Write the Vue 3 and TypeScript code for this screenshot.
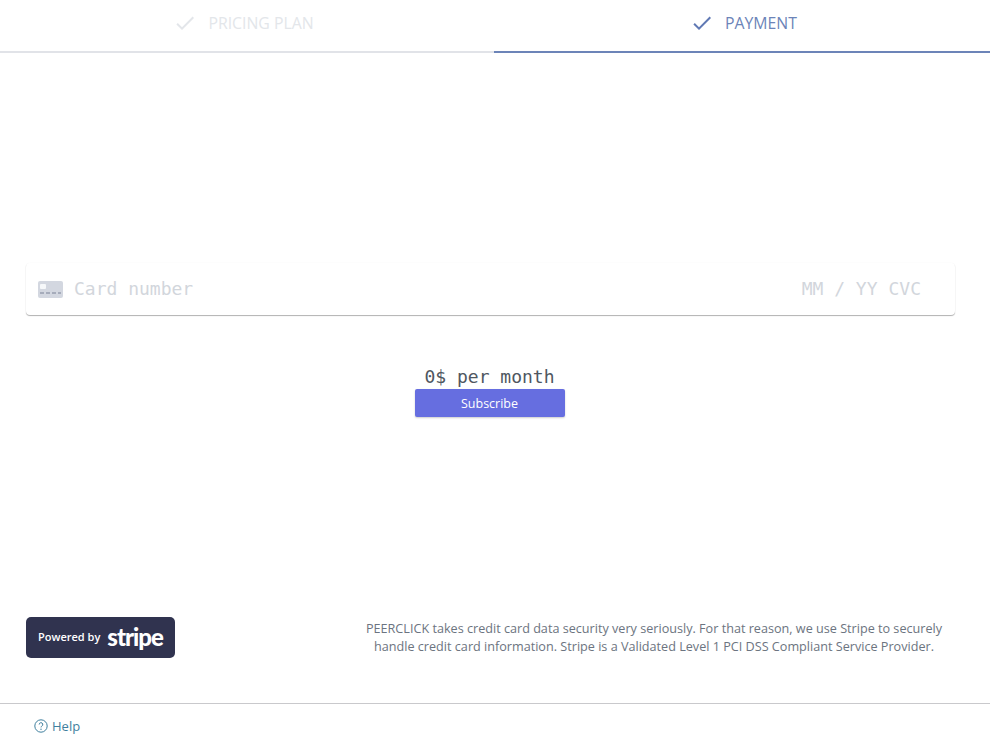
<template>
  <div class="page">
    <!-- STEPS -->
    <div class="steps">
      <div v-for="step in steps" :key="step.label" class="step" :class="{ active: step.active }">
        <svg class="check" width="24" height="24" viewBox="0 0 24 24">
          <path d="M9 16.2 4.8 12l-1.4 1.4L9 19 21 7l-1.4-1.4z" />
        </svg>
        <span>{{ step.label }}</span>
      </div>
    </div>

    <main class="content">
      <div class="card-field">
        <svg class="card-icon" width="25" height="17" viewBox="0 0 25 17">
          <rect width="25" height="17" rx="2" fill="#d3d7e0" />
          <rect x="2" y="3" width="6" height="5" rx="1" fill="#f6f8fa" />
          <path d="M2 12h4M8 12h4M14 12h4M20 12h3" stroke="#989fae" stroke-width="1.4" />
        </svg>
        <span class="card-number">Card number</span>
        <span class="card-date">MM / YY</span>
        <span class="card-cvc">CVC</span>
      </div>

      <div class="checkout">
        <div class="price">0$ per month</div>
        <button class="subscribe">Subscribe</button>
      </div>

      <div class="security">
        <div class="stripe-badge">
          <span class="powered">Powered by</span>
          <span class="stripe-word">stripe</span>
        </div>
        <p class="security-text">
          PEERCLICK takes credit card data security very seriously. For that reason, we use Stripe to securely
          handle credit card information. Stripe is a Validated Level 1 PCI DSS Compliant Service Provider.
        </p>
      </div>
    </main>

    <footer class="footer">
      <a class="help">
        <svg width="14" height="14" viewBox="0 0 14 14" fill="none">
          <circle cx="7" cy="7" r="6.2" stroke="#3f7f9e" />
          <path d="M5.2 5.5a1.8 1.8 0 1 1 2.6 1.6c-.6.3-.8.7-.8 1.3" stroke="#3f7f9e" />
          <circle cx="7" cy="10.2" r=".7" fill="#3f7f9e" />
        </svg>
        Help
      </a>
    </footer>
  </div>
</template>

<script setup lang="ts">
interface Step {
  label: string
  active: boolean
}

const steps: Step[] = [
  { label: 'PRICING PLAN', active: false },
  { label: 'PAYMENT', active: true },
]
</script>

<style>
html,
body {
  margin: 0;
  padding: 0;
  background: #fff;
}
</style>

<style scoped>
.page {
  height: 742px;
  display: flex;
  flex-direction: column;
  overflow: hidden;
  font-family: 'Open Sans', 'Noto Sans', sans-serif;
}

/* STEPS */
.steps {
  display: flex;
  height: 53px;
  flex: none;
}

.step {
  flex: none;
  width: 494px;
  height: 53px;
  box-sizing: border-box;
  border-bottom: 2px solid #e1e3e8;
  display: flex;
  justify-content: center;
  align-items: center;
  gap: 11px;
  padding: 0 7px 5px 0;
  font-size: 15.8px;
  color: #e3e6ea;
}

.step + .step {
  width: 496px;
  padding: 0 0 5px 3px;
}

.step.active {
  color: #6c84b8;
  border-bottom-color: #6c84b8;
}

.check {
  fill: #e3e6ea;
}

.step.active .check {
  fill: #6079b4;
}

/* CONTENT */
.content {
  flex: 1;
  display: flex;
  flex-direction: column;
  padding: 210px 35px 45px 26px;
}

.card-field {
  height: 52px;
  box-sizing: border-box;
  border-radius: 4px;
  padding: 0 34px 2px 12px;
  display: flex;
  align-items: center;
  background: #fff;
  box-shadow: 0 1px 1px rgba(0, 0, 0, 0.3), 0 0 2px rgba(0, 0, 0, 0.03);
  font-family: 'DejaVu Sans Mono', monospace;
  font-size: 18px;
  color: #d2d6dc;
}

.card-icon {
  margin: 2px 11px 0 0;
}

.card-number {
  flex: 1;
}

.card-date {
  margin-right: 11px;
}

/* CHECKOUT */
.checkout {
  margin: 50px 2px 0 0;
  display: flex;
  flex-direction: column;
  align-items: center;
}

.price {
  font-family: 'DejaVu Sans Mono', monospace;
  font-size: 18px;
  line-height: 24px;
  color: #4f5761;
}

.subscribe {
  width: 150px;
  height: 28px;
  border: none;
  border-radius: 2px;
  background: #666ee0;
  color: #fff;
  font-family: inherit;
  font-size: 12.5px;
  box-shadow: 0 1px 2px rgba(0, 0, 0, 0.2);
}

/* SECURITY */
.security {
  margin-top: auto;
  display: flex;
  align-items: center;
  justify-content: space-between;
}

.stripe-badge {
  width: 149px;
  height: 41px;
  box-sizing: border-box;
  padding: 0 0 2px 12px;
  border-radius: 5px;
  background: #30334f;
  color: #fff;
  display: flex;
  align-items: center;
  gap: 7px;
}

.powered {
  font-size: 11px;
  font-weight: 600;
}

.stripe-word {
  font-family: 'Lato', sans-serif;
  font-size: 24px;
  font-weight: 900;
  letter-spacing: -1px;
  line-height: 1;
}

.security-text {
  width: 590px;
  margin: 0 6px 0 0;
  font-size: 12.63px;
  line-height: 18px;
  text-align: center;
  color: #6c7480;
}

/* FOOTER */
.footer {
  flex: none;
  height: 39px;
  box-sizing: border-box;
  border-top: 1px solid #c9c9cc;
  padding: 14px 0 0 34px;
}

.help {
  display: flex;
  align-items: center;
  gap: 4px;
  font-size: 13px;
  line-height: 16px;
  color: #3f7f9e;
}
</style>
